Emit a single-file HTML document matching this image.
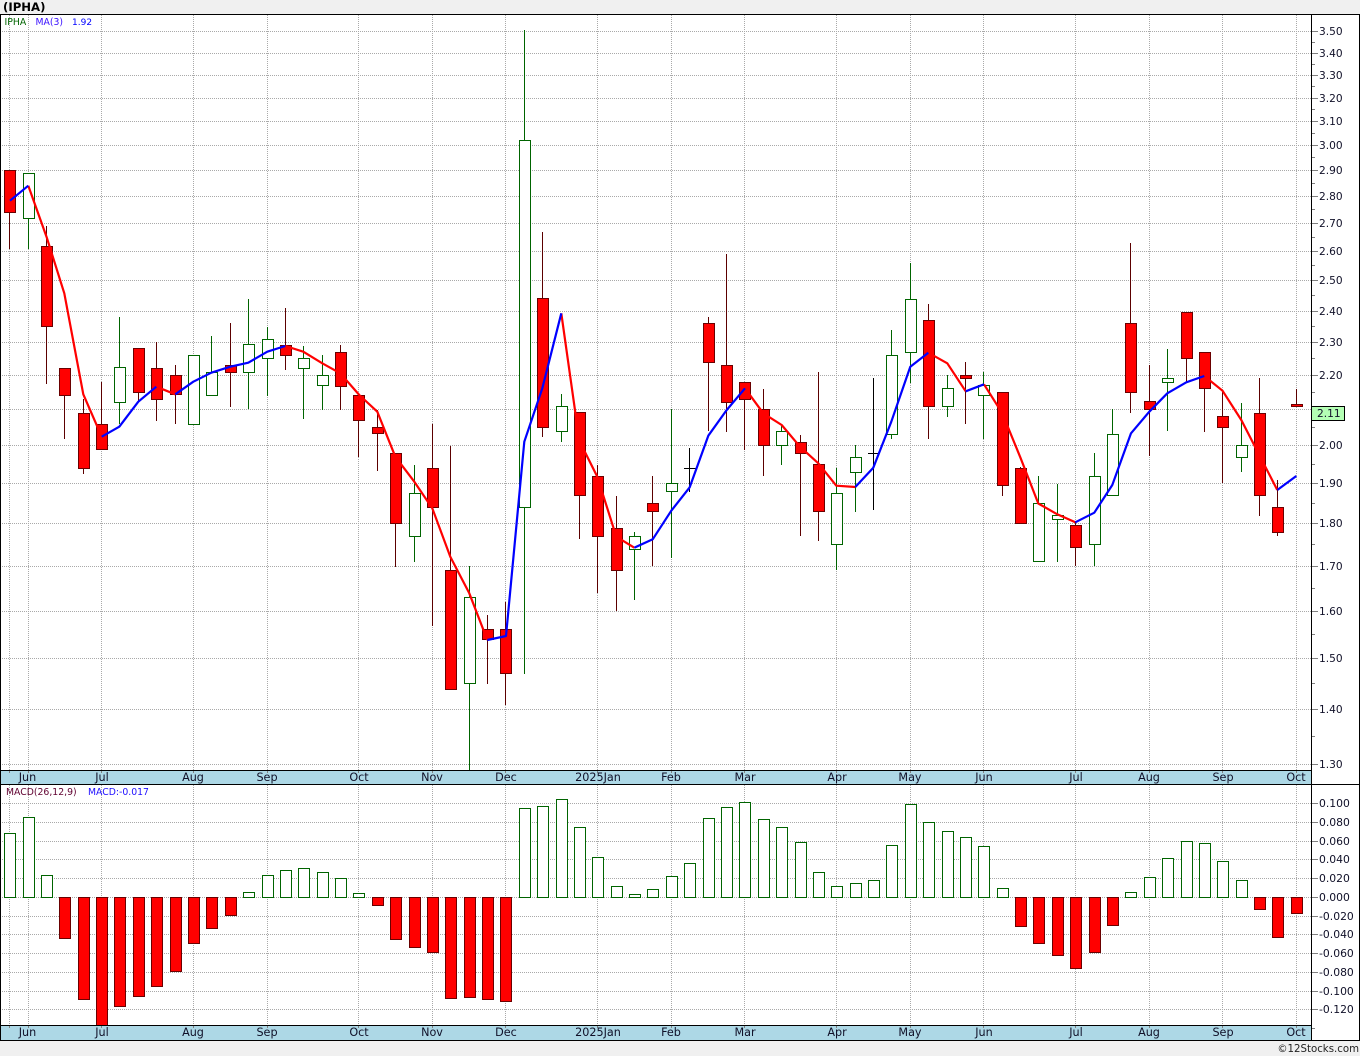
<!DOCTYPE html>
<html lang="en">
<head>
<meta charset="utf-8">
<title>IPHA chart</title>
<style>
html,body{margin:0;padding:0;background:#f0f0f0;width:1360px;height:1056px;overflow:hidden}
svg{display:block}
text{font-family:"DejaVu Sans","Liberation Sans",sans-serif;font-size:10.6px;fill:#101028}
.c{text-anchor:middle;font-size:11.2px}
.m{font-size:10.8px}
.s{font-size:9.3px}
</style>
</head>
<body>
<svg xmlns="http://www.w3.org/2000/svg" width="1360" height="1056" viewBox="0 0 1360 1056">
<rect x="0" y="0" width="1360" height="1056" fill="#f0f0f0"/>
<rect x="0" y="14" width="1360" height="1026" fill="#fff"/>
<text x="3" y="11" style="font-weight:bold;font-size:11.7px;fill:#000">(IPHA)</text>

<!-- band backgrounds -->
<rect x="0" y="770" width="1311" height="14" fill="#add8e6"/>
<rect x="0" y="1025" width="1311" height="15" fill="#add8e6"/>

<!-- grid -->
<g fill="none" stroke="#a9a9a9" stroke-width="1" stroke-dasharray="1 1" shape-rendering="crispEdges">
<path d="M0 31.5H1311M0 53.5H1311M0 75.5H1311M0 98.5H1311M0 121.5H1311M0 145.5H1311M0 170.5H1311M0 196.5H1311M0 223.5H1311M0 251.5H1311M0 280.5H1311M0 311.5H1311M0 342.5H1311M0 375.5H1311M0 409.5H1311M0 445.5H1311M0 483.5H1311M0 523.5H1311M0 566.5H1311M0 611.5H1311M0 658.5H1311M0 709.5H1311M0 764.5H1311"/>
<path d="M0 803.5H1311M0 822.5H1311M0 841.5H1311M0 859.5H1311M0 878.5H1311M0 897.5H1311M0 916.5H1311M0 934.5H1311M0 953.5H1311M0 972.5H1311M0 991.5H1311M0 1009.5H1311"/>
<path d="M9.5 15V770M28.5 15V770M101.5 15V770M193.5 15V770M267.5 15V770M358.5 15V770M432.5 15V770M505.5 15V770M597.5 15V770M671.5 15V770M744.5 15V770M836.5 15V770M910.5 15V770M983.5 15V770M1075.5 15V770M1149.5 15V770M1222.5 15V770M1296.5 15V770"/>
<path d="M9.5 785V1025M28.5 785V1025M101.5 785V1025M193.5 785V1025M267.5 785V1025M358.5 785V1025M432.5 785V1025M505.5 785V1025M597.5 785V1025M671.5 785V1025M744.5 785V1025M836.5 785V1025M910.5 785V1025M983.5 785V1025M1075.5 785V1025M1149.5 785V1025M1222.5 785V1025M1296.5 785V1025"/>
</g>

<!-- axis ticks -->
<g fill="none" stroke="#808080" stroke-width="1" shape-rendering="crispEdges">
<path d="M1311 31.5h7M1311 53.5h7M1311 75.5h7M1311 98.5h7M1311 121.5h7M1311 145.5h7M1311 170.5h7M1311 196.5h7M1311 223.5h7M1311 251.5h7M1311 280.5h7M1311 311.5h7M1311 342.5h7M1311 375.5h7M1311 409.5h7M1311 445.5h7M1311 483.5h7M1311 523.5h7M1311 566.5h7M1311 611.5h7M1311 658.5h7M1311 709.5h7M1311 764.5h7"/>
<path d="M1311 42.5h4M1311 64.5h4M1311 86.5h4M1311 109.5h4M1311 133.5h4M1311 157.5h4M1311 183.5h4M1311 209.5h4M1311 237.5h4M1311 265.5h4M1311 295.5h4M1311 326.5h4M1311 358.5h4M1311 392.5h4M1311 427.5h4M1311 464.5h4M1311 503.5h4M1311 544.5h4M1311 588.5h4M1311 634.5h4M1311 683.5h4M1311 736.5h4"/>
<path d="M1311 803.5h7M1311 822.5h7M1311 841.5h7M1311 859.5h7M1311 878.5h7M1311 897.5h7M1311 916.5h7M1311 934.5h7M1311 953.5h7M1311 972.5h7M1311 991.5h7M1311 1009.5h7M1311 1028.5h4"/>
<path d="M9.5 770v3M28.5 770v3M101.5 770v3M193.5 770v3M267.5 770v3M358.5 770v3M432.5 770v3M505.5 770v3M597.5 770v3M671.5 770v3M744.5 770v3M836.5 770v3M910.5 770v3M983.5 770v3M1075.5 770v3M1149.5 770v3M1222.5 770v3M1296.5 770v3"/>
<path d="M9.5 1025v3M28.5 1025v3M101.5 1025v3M193.5 1025v3M267.5 1025v3M358.5 1025v3M432.5 1025v3M505.5 1025v3M597.5 1025v3M671.5 1025v3M744.5 1025v3M836.5 1025v3M910.5 1025v3M983.5 1025v3M1075.5 1025v3M1149.5 1025v3M1222.5 1025v3M1296.5 1025v3"/>
</g>

<!-- wicks -->
<g fill="none" stroke-width="1" shape-rendering="crispEdges">
<path stroke="#5c0000" d="M9.5 170V249M46.5 226V384M64.5 368V439M83.5 399V474M101.5 382V449M138.5 348V402M156.5 342V421M175.5 365V424M230.5 323V407M285.5 308V370M340.5 345V410M358.5 395V457M377.5 410V471M395.5 453V567M432.5 424V626M450.5 446V689M487.5 615V684M505.5 602V705M542.5 232V437M579.5 412V539M597.5 465V593M616.5 496V611M652.5 476V566M708.5 317V431M726.5 254V432M744.5 382V450M763.5 389V476M800.5 435V536M818.5 372V541M928.5 304V439M965.5 362V424M1002.5 392V496M1020.5 467V523M1075.5 522V566M1130.5 243V413M1149.5 365V456M1186.5 312V383M1204.5 352V432M1222.5 390V483M1259.5 378V516M1277.5 480V536M1296.5 389V406"/>
<path stroke="#006400" d="M28.5 173V249M119.5 317V424M193.5 355V424M211.5 336V395M248.5 299V409M267.5 327V396M303.5 346V419M322.5 355V410M414.5 465V562M469.5 566V770M524.5 30V674M561.5 394V442M634.5 532V600M671.5 409V558M781.5 425V465M836.5 468V570M855.5 445V512M891.5 330V439M910.5 263V383M947.5 375V417M983.5 372V439M1038.5 476V561M1057.5 484V562M1094.5 453V566M1112.5 409V495M1167.5 349V431M1241.5 403V472"/>
<path stroke="#000" d="M689.5 448V492M684 468.5H696M873.5 378V510M868 453.5H878"/>
</g>

<!-- red bodies -->
<g fill="#f00" stroke="#6a0000" stroke-width="1" shape-rendering="crispEdges">
<rect x="4.5" y="170.5" width="11" height="42"/>
<rect x="41.5" y="246.5" width="11" height="80"/>
<rect x="59.5" y="368.5" width="11" height="27"/>
<rect x="78.5" y="413.5" width="11" height="55"/>
<rect x="96.5" y="424.5" width="11" height="25"/>
<rect x="133.5" y="348.5" width="11" height="44"/>
<rect x="151.5" y="368.5" width="11" height="31"/>
<rect x="170.5" y="375.5" width="11" height="19"/>
<rect x="225.5" y="365.5" width="11" height="7"/>
<rect x="280.5" y="345.5" width="11" height="10"/>
<rect x="335.5" y="352.5" width="11" height="34"/>
<rect x="353.5" y="395.5" width="11" height="25"/>
<rect x="372.5" y="427.5" width="11" height="6"/>
<rect x="390.5" y="453.5" width="11" height="70"/>
<rect x="427.5" y="468.5" width="11" height="39"/>
<rect x="445.5" y="570.5" width="11" height="119"/>
<rect x="482.5" y="629.5" width="11" height="10"/>
<rect x="500.5" y="629.5" width="11" height="44"/>
<rect x="537.5" y="298.5" width="11" height="129"/>
<rect x="574.5" y="412.5" width="11" height="83"/>
<rect x="592.5" y="476.5" width="11" height="60"/>
<rect x="611.5" y="528.5" width="11" height="42"/>
<rect x="647.5" y="503.5" width="11" height="8"/>
<rect x="703.5" y="323.5" width="11" height="39"/>
<rect x="721.5" y="365.5" width="11" height="37"/>
<rect x="739.5" y="382.5" width="11" height="17"/>
<rect x="758.5" y="409.5" width="11" height="36"/>
<rect x="795.5" y="442.5" width="11" height="11"/>
<rect x="813.5" y="464.5" width="11" height="47"/>
<rect x="923.5" y="320.5" width="11" height="86"/>
<rect x="960.5" y="375.5" width="11" height="3"/>
<rect x="997.5" y="392.5" width="11" height="93"/>
<rect x="1015.5" y="468.5" width="11" height="55"/>
<rect x="1070.5" y="525.5" width="11" height="22"/>
<rect x="1125.5" y="323.5" width="11" height="69"/>
<rect x="1144.5" y="401.5" width="11" height="8"/>
<rect x="1181.5" y="312.5" width="11" height="46"/>
<rect x="1199.5" y="352.5" width="11" height="36"/>
<rect x="1217.5" y="416.5" width="11" height="11"/>
<rect x="1254.5" y="413.5" width="11" height="82"/>
<rect x="1272.5" y="507.5" width="11" height="25"/>
<rect x="1291.5" y="404.5" width="11" height="2"/>
<!-- MACD red -->
<rect x="59.5" y="897.5" width="11" height="41"/>
<rect x="78.5" y="897.5" width="11" height="102"/>
<rect x="96.5" y="897.5" width="11" height="128"/>
<rect x="114.5" y="897.5" width="11" height="109"/>
<rect x="133.5" y="897.5" width="11" height="99"/>
<rect x="151.5" y="897.5" width="11" height="89"/>
<rect x="170.5" y="897.5" width="11" height="74"/>
<rect x="188.5" y="897.5" width="11" height="46"/>
<rect x="206.5" y="897.5" width="11" height="31"/>
<rect x="225.5" y="897.5" width="11" height="18"/>
<rect x="372.5" y="897.5" width="11" height="8"/>
<rect x="390.5" y="897.5" width="11" height="42"/>
<rect x="409.5" y="897.5" width="11" height="50"/>
<rect x="427.5" y="897.5" width="11" height="55"/>
<rect x="445.5" y="897.5" width="11" height="101"/>
<rect x="464.5" y="897.5" width="11" height="100"/>
<rect x="482.5" y="897.5" width="11" height="102"/>
<rect x="500.5" y="897.5" width="11" height="104"/>
<rect x="1015.5" y="897.5" width="11" height="29"/>
<rect x="1033.5" y="897.5" width="11" height="46"/>
<rect x="1052.5" y="897.5" width="11" height="58"/>
<rect x="1070.5" y="897.5" width="11" height="71"/>
<rect x="1089.5" y="897.5" width="11" height="55"/>
<rect x="1107.5" y="897.5" width="11" height="28"/>
<rect x="1254.5" y="897.5" width="11" height="12"/>
<rect x="1272.5" y="897.5" width="11" height="40"/>
<rect x="1291.5" y="897.5" width="11" height="16"/>
</g>

<!-- green bodies -->
<g fill="#fff" stroke="#006400" stroke-width="1" shape-rendering="crispEdges">
<rect x="23.5" y="173.5" width="11" height="45"/>
<rect x="114.5" y="367.5" width="11" height="35"/>
<rect x="188.5" y="355.5" width="11" height="69"/>
<rect x="206.5" y="372.5" width="11" height="23"/>
<rect x="243.5" y="344.5" width="11" height="28"/>
<rect x="262.5" y="339.5" width="11" height="19"/>
<rect x="298.5" y="358.5" width="11" height="10"/>
<rect x="317.5" y="375.5" width="11" height="10"/>
<rect x="409.5" y="493.5" width="11" height="43"/>
<rect x="464.5" y="597.5" width="11" height="86"/>
<rect x="519.5" y="140.5" width="11" height="367"/>
<rect x="556.5" y="406.5" width="11" height="25"/>
<rect x="629.5" y="536.5" width="11" height="13"/>
<rect x="666.5" y="483.5" width="11" height="8"/>
<rect x="776.5" y="431.5" width="11" height="14"/>
<rect x="831.5" y="493.5" width="11" height="51"/>
<rect x="850.5" y="457.5" width="11" height="15"/>
<rect x="886.5" y="355.5" width="11" height="79"/>
<rect x="905.5" y="299.5" width="11" height="53"/>
<rect x="942.5" y="388.5" width="11" height="18"/>
<rect x="978.5" y="385.5" width="11" height="10"/>
<rect x="1033.5" y="503.5" width="11" height="58"/>
<rect x="1052.5" y="515.5" width="11" height="4"/>
<rect x="1089.5" y="476.5" width="11" height="68"/>
<rect x="1107.5" y="434.5" width="11" height="61"/>
<rect x="1162.5" y="378.5" width="11" height="4"/>
<rect x="1236.5" y="445.5" width="11" height="12"/>
<!-- MACD green -->
<rect x="4.5" y="833.5" width="11" height="64"/>
<rect x="23.5" y="817.5" width="11" height="80"/>
<rect x="41.5" y="875.5" width="11" height="22"/>
<rect x="243.5" y="892.5" width="11" height="5"/>
<rect x="262.5" y="875.5" width="11" height="22"/>
<rect x="280.5" y="870.5" width="11" height="27"/>
<rect x="298.5" y="868.5" width="11" height="29"/>
<rect x="317.5" y="872.5" width="11" height="25"/>
<rect x="335.5" y="878.5" width="11" height="19"/>
<rect x="353.5" y="893.5" width="11" height="4"/>
<rect x="519.5" y="808.5" width="11" height="89"/>
<rect x="537.5" y="806.5" width="11" height="91"/>
<rect x="556.5" y="799.5" width="11" height="98"/>
<rect x="574.5" y="827.5" width="11" height="70"/>
<rect x="592.5" y="857.5" width="11" height="40"/>
<rect x="611.5" y="886.5" width="11" height="11"/>
<rect x="629.5" y="894.5" width="11" height="3"/>
<rect x="647.5" y="889.5" width="11" height="8"/>
<rect x="666.5" y="876.5" width="11" height="21"/>
<rect x="684.5" y="863.5" width="11" height="34"/>
<rect x="703.5" y="818.5" width="11" height="79"/>
<rect x="721.5" y="807.5" width="11" height="90"/>
<rect x="739.5" y="802.5" width="11" height="95"/>
<rect x="758.5" y="819.5" width="11" height="78"/>
<rect x="776.5" y="827.5" width="11" height="70"/>
<rect x="795.5" y="842.5" width="11" height="55"/>
<rect x="813.5" y="872.5" width="11" height="25"/>
<rect x="831.5" y="886.5" width="11" height="11"/>
<rect x="850.5" y="883.5" width="11" height="14"/>
<rect x="868.5" y="880.5" width="11" height="17"/>
<rect x="886.5" y="845.5" width="11" height="52"/>
<rect x="905.5" y="804.5" width="11" height="93"/>
<rect x="923.5" y="822.5" width="11" height="75"/>
<rect x="942.5" y="831.5" width="11" height="66"/>
<rect x="960.5" y="837.5" width="11" height="60"/>
<rect x="978.5" y="846.5" width="11" height="51"/>
<rect x="997.5" y="888.5" width="11" height="9"/>
<rect x="1125.5" y="892.5" width="11" height="5"/>
<rect x="1144.5" y="877.5" width="11" height="20"/>
<rect x="1162.5" y="858.5" width="11" height="39"/>
<rect x="1181.5" y="841.5" width="11" height="56"/>
<rect x="1199.5" y="843.5" width="11" height="54"/>
<rect x="1217.5" y="861.5" width="11" height="36"/>
<rect x="1236.5" y="880.5" width="11" height="17"/>
</g>

<!-- moving average -->
<g fill="none" stroke-width="2.2" stroke-linejoin="round">
<g stroke="#f00">
<polyline points="28.3,185.7 46.5,236.7 64.3,293.3 83.3,394.3 101.7,436.7"/>
<polyline points="156.3,386.7 175.3,394.3"/>
<polyline points="285.3,346 303.3,351.7 322.3,363.3 340.3,373.3 359.3,395 377.3,411.7 395.3,456.7 414.3,481.7 432.3,508.3 450.3,556.7 469.3,593.3 487.3,640"/>
<polyline points="561.3,313.3 579.3,440.7 597.3,476.7 616.3,536.7 634.3,547.7"/>
<polyline points="745,388.3 763.3,413.3 781.7,425 800,446.7 818.3,463.3 836.3,485.7 855.3,487"/>
<polyline points="928.3,352.7 947.3,363.3 965.7,391.3"/>
<polyline points="984,384.3 1002.3,413.3 1020.3,457.3 1038.3,503.5 1057.3,514.3 1075.3,522.3"/>
<polyline points="1204.3,376 1222.5,390.7 1241.3,420 1259.3,455 1277.3,490"/>
</g>
<g stroke="#00f">
<polyline points="10,200.7 28.3,185.7"/>
<polyline points="101.7,436.7 119.3,426.7 138.3,401.7 156.3,386.7"/>
<polyline points="175.3,394.3 193.3,381.7 211.3,372.7 230.3,366.7 248.3,362.7 267.3,351.7 285.3,346"/>
<polyline points="487.3,640 506,636 524.3,441.7 542.3,388.3 561.3,313.3"/>
<polyline points="634.3,547.7 652.7,539.3 671.3,510.7 689.7,487.3 708.3,435.7 726.7,410 745,388.3"/>
<polyline points="855.3,487 873.3,467.7 891.3,421.7 910.3,366.7 928.3,352.7"/>
<polyline points="965.7,391.3 984,384.3"/>
<polyline points="1075.3,522.3 1094.3,512.7 1112.3,485 1131,433.3 1149.3,411.7 1167.3,393.3 1186.3,382.3 1204.3,376"/>
<polyline points="1277.3,490 1296.3,476"/>
</g>
</g>

<!-- frame lines -->
<g fill="none" stroke="#000" stroke-width="1" shape-rendering="crispEdges">
<path d="M0 14.5H1360M0 770.5H1311M0 784.5H1360M0 1025.5H1311M0 1040.5H1360M0.5 14V1040M1311.5 14V1040M1359.5 14V1040"/>
</g>

<!-- price labels -->
<g>
<text x="1319" y="35">3.50</text><text x="1319" y="57">3.40</text><text x="1319" y="79">3.30</text><text x="1319" y="102">3.20</text><text x="1319" y="125">3.10</text><text x="1319" y="149">3.00</text><text x="1319" y="174">2.90</text><text x="1319" y="200">2.80</text><text x="1319" y="227">2.70</text><text x="1319" y="255">2.60</text><text x="1319" y="284">2.50</text><text x="1319" y="315">2.40</text><text x="1319" y="346">2.30</text><text x="1319" y="379">2.20</text><text x="1319" y="449">2.00</text><text x="1319" y="487">1.90</text><text x="1319" y="527">1.80</text><text x="1319" y="570">1.70</text><text x="1319" y="615">1.60</text><text x="1319" y="662">1.50</text><text x="1319" y="713">1.40</text><text x="1319" y="768">1.30</text>
</g>
<rect x="1311.5" y="406.5" width="33" height="14" fill="#b4ffb4" stroke="#000" stroke-width="1" shape-rendering="crispEdges"/>
<text x="1317" y="417">2.11</text>

<!-- MACD labels -->
<g>
<text class="m" x="1319" y="807">0.100</text><text class="m" x="1319" y="826">0.080</text><text class="m" x="1319" y="845">0.060</text><text class="m" x="1319" y="863">0.040</text><text class="m" x="1319" y="882">0.020</text><text class="m" x="1319" y="901">0.000</text><text class="m" x="1319" y="920">-0.020</text><text class="m" x="1319" y="938">-0.040</text><text class="m" x="1319" y="957">-0.060</text><text class="m" x="1319" y="976">-0.080</text><text class="m" x="1319" y="995">-0.100</text><text class="m" x="1319" y="1013">-0.120</text>
</g>

<!-- month labels -->
<g>
<text class="c" x="27.5" y="781">Jun</text><text class="c" x="102" y="781">Jul</text><text class="c" x="193" y="781">Aug</text><text class="c" x="267" y="781">Sep</text><text class="c" x="359" y="781">Oct</text><text class="c" x="432" y="781">Nov</text><text class="c" x="506" y="781">Dec</text><text class="c" x="598" y="781">2025Jan</text><text class="c" x="671" y="781">Feb</text><text class="c" x="745" y="781">Mar</text><text class="c" x="837" y="781">Apr</text><text class="c" x="910" y="781">May</text><text class="c" x="984" y="781">Jun</text><text class="c" x="1076" y="781">Jul</text><text class="c" x="1149" y="781">Aug</text><text class="c" x="1223" y="781">Sep</text><text class="c" x="1296" y="781">Oct</text>
<text class="c" x="27.5" y="1036">Jun</text><text class="c" x="102" y="1036">Jul</text><text class="c" x="193" y="1036">Aug</text><text class="c" x="267" y="1036">Sep</text><text class="c" x="359" y="1036">Oct</text><text class="c" x="432" y="1036">Nov</text><text class="c" x="506" y="1036">Dec</text><text class="c" x="598" y="1036">2025Jan</text><text class="c" x="671" y="1036">Feb</text><text class="c" x="745" y="1036">Mar</text><text class="c" x="837" y="1036">Apr</text><text class="c" x="910" y="1036">May</text><text class="c" x="984" y="1036">Jun</text><text class="c" x="1076" y="1036">Jul</text><text class="c" x="1149" y="1036">Aug</text><text class="c" x="1223" y="1036">Sep</text><text class="c" x="1296" y="1036">Oct</text>
</g>

<!-- legends -->
<text class="s" x="4.5" y="25" style="fill:#006400">IPHA</text>
<text class="s" x="35.5" y="25" style="fill:#3a10ff">MA(3)</text>
<text class="s" x="72" y="25" style="fill:#0000ff;font-size:9px">1.92</text>
<text class="s" x="6" y="795" style="fill:#600030">MACD(26,12,9)</text>
<text class="s" x="88" y="795" style="fill:#2010ff">MACD:-0.017</text>

<text x="1359" y="1052" style="text-anchor:end;fill:#222;font-size:10.2px">©12Stocks.com</text>
</svg>
</body>
</html>
